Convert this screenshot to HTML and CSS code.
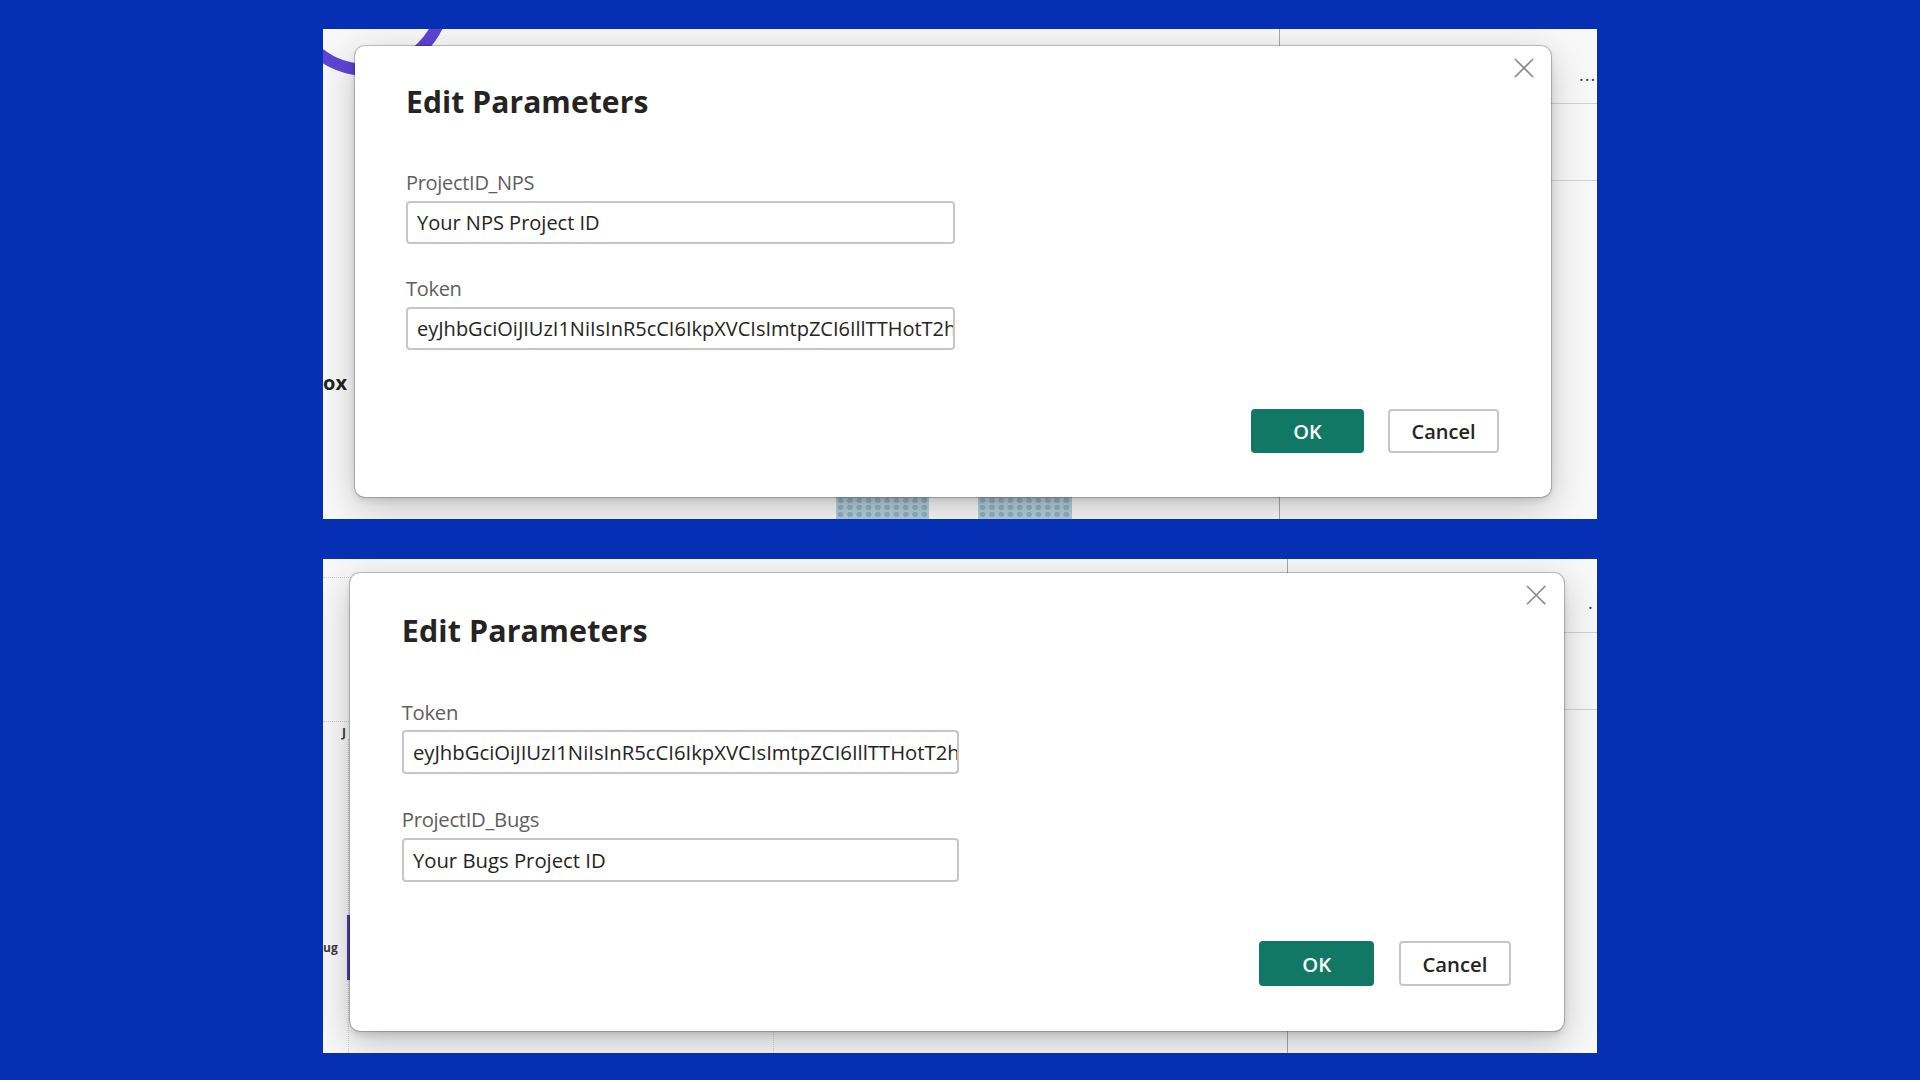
FILE: index.html
```html
<!DOCTYPE html>
<html lang="en">
<head>
<meta charset="utf-8">
<title>Edit Parameters</title>
<link rel="stylesheet" href="styles.css">
</head>
<body>
<main class="stage">
  <section class="panel panel--a">
    <div class="canvas">
      <svg class="arc" width="200" height="120" viewBox="0 0 200 120"><circle cx="44" cy="-37" r="78" fill="none" stroke="#5e44d4" stroke-width="12"/></svg>
      <span class="clip-word clip-word--ox">ox</span>
      <span class="vline vline--a"></span>
      <span class="hline hline--a1"></span>
      <span class="hline hline--a2"></span>
      <span class="more more--a">···</span>
      <span class="dots dots--1"></span>
      <span class="dots dots--2"></span>
    </div>
    <div class="dialog" role="dialog" aria-labelledby="t1">
      <button class="close" aria-label="Close"><svg width="20" height="20" viewBox="0 0 20 20"><path d="M1 1 L19 19 M19 1 L1 19" stroke="#8a8886" stroke-width="1.6" fill="none"/></svg></button>
      <h1 class="title" id="t1">Edit Parameters</h1>
      <div class="field">
        <label class="label">ProjectID_NPS</label>
        <input class="input" readonly value="Your NPS Project ID">
      </div>
      <div class="field">
        <label class="label">Token</label>
        <input class="input" readonly value="eyJhbGciOiJIUzI1NiIsInR5cCI6IkpXVCIsImtpZCI6IllTTHotT2hEeTRsZ0JxR1RqNXpLdWJ3In0">
      </div>
      <div class="footer">
        <button class="btn btn--primary">OK</button>
        <button class="btn btn--secondary">Cancel</button>
      </div>
    </div>
  </section>

  <section class="panel panel--b">
    <div class="canvas">
      <span class="gridline gridline--1"></span>
      <span class="gridline gridline--2"></span>
      <span class="axis-label axis-label--j">J</span>
      <span class="vdots vdots--left"></span>
      <span class="vdots vdots--mid"></span>
      <span class="bar"></span>
      <span class="axis-label axis-label--ug">ug</span>
      <span class="vline vline--b"></span>
      <span class="hline hline--b1"></span>
      <span class="hline hline--b2"></span>
      <span class="more more--b">·</span>
    </div>
    <div class="dialog dialog--b" role="dialog" aria-labelledby="t2">
      <button class="close" aria-label="Close"><svg width="20" height="20" viewBox="0 0 20 20"><path d="M1 1 L19 19 M19 1 L1 19" stroke="#8a8886" stroke-width="1.6" fill="none"/></svg></button>
      <h1 class="title" id="t2">Edit Parameters</h1>
      <div class="field">
        <label class="label">Token</label>
        <input class="input" readonly value="eyJhbGciOiJIUzI1NiIsInR5cCI6IkpXVCIsImtpZCI6IllTTHotT2hEeTRsZ0JxR1RqNXpLdWJ3In0">
      </div>
      <div class="field">
        <label class="label">ProjectID_Bugs</label>
        <input class="input" readonly value="Your Bugs Project ID">
      </div>
      <div class="footer">
        <button class="btn btn--primary">OK</button>
        <button class="btn btn--secondary">Cancel</button>
      </div>
    </div>
  </section>
</main>
</body>
</html>
```

FILE: styles.css
```css
* { box-sizing: border-box; }

html, body {
  margin: 0;
  padding: 0;
}

body {
  width: 1920px;
  height: 1080px;
  overflow: hidden;
  background: #0530b4;
  font-family: "Open Sans", "Noto Sans", "Liberation Sans", sans-serif;
  color: #252423;
}

.stage {
  display: flex;
  flex-direction: column;
  gap: 40px;
  padding: 29px 0 0 323px;
}

.panel {
  position: relative;
  width: 1274px;
  overflow: hidden;
  background: #f8f8f8;
}

.panel--a {
  height: 490px;
  padding: 17px 0 0 32px;
}

.panel--b {
  height: 494px;
  padding: 14px 0 0 27px;
}

/* background report canvas bits */
.canvas {
  position: absolute;
  inset: 0;
}

.arc {
  position: absolute;
  left: 0;
  top: 0;
}

.clip-word {
  position: absolute;
  font-weight: 700;
  color: #252423;
}

.clip-word--ox {
  left: 0;
  top: 340px;
  font-size: 20px;
}

.vline {
  position: absolute;
  top: 0;
  bottom: 0;
  width: 1px;
  background: #a9a9a9;
}

.vline--a { left: 956px; }
.vline--b { left: 964px; }

.hline {
  position: absolute;
  right: 0;
  height: 1px;
  background: #d2d2d2;
}

.hline--a1 { left: 956px; top: 74px; }
.hline--a2 { left: 956px; top: 151px; }
.hline--b1 { left: 964px; top: 73px; }
.hline--b2 { left: 964px; top: 150px; }

.more {
  position: absolute;
  font-size: 18px;
  line-height: 1;
  color: #3b3a39;
}

.more--a { left: 1256px; top: 41px; letter-spacing: 1px; }
.more--b { left: 1265px; top: 39px; }

.dots {
  position: absolute;
  bottom: 0;
  height: 22px;
  background-color: #b4ccd7;
  background-image: radial-gradient(circle, #8fb2c2 2.6px, transparent 3px);
  background-size: 9.3px 7px;
}

.dots--1 { left: 513px; width: 93px; }
.dots--2 { left: 655px; width: 94px; }

.gridline {
  position: absolute;
  left: 0;
  width: 30px;
  border-top: 1px dotted #c8c8c8;
}

.gridline--1 { top: 18px; }
.gridline--2 { top: 162px; }

.axis-label {
  position: absolute;
  font-family: "Open Sans", "Liberation Sans", sans-serif;
  font-weight: 700;
  color: #3b3a39;
  line-height: 1;
}

.axis-label--j { left: 19px; top: 168px; font-size: 12px; }
.axis-label--ug { left: 0; top: 383px; font-size: 12px; }

.vdots {
  position: absolute;
  bottom: 0;
  width: 0;
  border-left: 1px dotted #cfcfcf;
}

.vdots--left { left: 25px; top: 180px; }
.vdots--mid { left: 450px; top: 440px; }

.bar {
  position: absolute;
  left: 24px;
  top: 356px;
  width: 3px;
  height: 65px;
  background: #4b3fb0;
}

/* dialog */
.dialog {
  position: relative;
  width: 1196px;
  height: 451px;
  padding: 36px 52px 0 51px;
  background: #fff;
  border-radius: 10px;
  box-shadow:
    0 0 0 1px rgba(0, 0, 0, 0.2),
    0 3px 6px rgba(0, 0, 0, 0.12),
    0 10px 36px rgba(0, 0, 0, 0.22);
}

.dialog--b {
  zoom: 1.015;
}

.close {
  position: absolute;
  top: 12px;
  right: 17px;
  width: 20px;
  height: 20px;
  padding: 0;
  border: 0;
  background: none;
  display: block;
}

.close svg { display: block; }

.title {
  margin: 0 0 47px;
  font-size: 30px;
  line-height: 40px;
  font-weight: 700;
  color: #252423;
  letter-spacing: 0.1px;
}

.field {
  display: flex;
  flex-direction: column;
  gap: 4px;
  width: 549px;
}

.field + .field {
  margin-top: 31px;
}

.label {
  font-size: 20px;
  line-height: 28px;
  color: #605e5c;
  letter-spacing: -0.3px;
}

.input {
  display: block;
  width: 549px;
  height: 43px;
  margin: 0;
  padding: 0 0 0 9px;
  border: 2px solid #c6c6c6;
  border-radius: 4px;
  background: #fff;
  font-family: "Open Sans", "Noto Sans", "Liberation Sans", sans-serif;
  font-size: 20px;
  color: #252423;
  outline: none;
}

.footer {
  display: flex;
  justify-content: flex-end;
  gap: 24px;
  margin-top: 59px;
}

.btn {
  height: 44px;
  margin: 0;
  padding: 0;
  border-radius: 4px;
  font-family: "Open Sans", "Noto Sans", "Liberation Sans", sans-serif;
  font-size: 20px;
  font-weight: 600;
}

.btn--primary {
  width: 113px;
  border: 0;
  background: #117865;
  color: #fff;
}

.btn--secondary {
  width: 111px;
  border: 2px solid #c8c6c4;
  background: #fff;
  color: #252423;
}
```
